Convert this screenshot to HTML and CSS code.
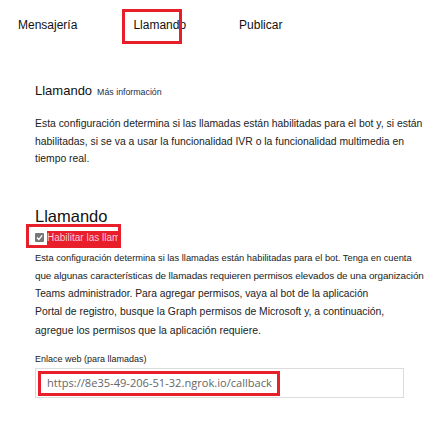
FILE: index.html
```html
<!DOCTYPE html>
<html lang="es">
<head>
<meta charset="utf-8">
<link rel="stylesheet" href="styles.css">
</head>
<body>
  <nav class="tabs">
    <span class="tab">Mensajería</span>
    <span class="tab tab-marked">Llamando<span class="mark mark-tab"></span></span>
    <span class="tab">Publicar</span>
  </nav>

  <section class="intro">
    <div class="intro-head">
      <h2 class="intro-title">Llamando</h2>
      <a class="more">Más información</a>
    </div>
    <p class="intro-text">
      <span class="line">Esta configuración determina si las llamadas están habilitadas para el bot y, si están</span>
      <span class="line">habilitadas, si se va a usar la funcionalidad IVR o la funcionalidad multimedia en</span>
      <span class="line">tiempo real.</span>
    </p>
  </section>

  <section class="calling">
    <h1 class="calling-title">Llamando</h1>
    <label class="enable">
      <span class="check"><svg viewBox="0 0 9 9" width="9" height="9"><path d="M2 4.6 L3.8 6.4 L7.2 2.4" fill="none" stroke="#fff" stroke-width="1.4"/></svg></span>
      <span class="enable-text">Habilitar las llam</span>
      <span class="mark mark-check"></span>
    </label>
    <p class="calling-text">
      <span class="line l1">Esta configuración determina si las llamadas están habilitadas para el bot. Tenga en cuenta</span>
      <span class="line l2">que algunas características de llamadas requieren permisos elevados de una organización</span>
      <span class="line l3">Teams administrador. Para agregar permisos, vaya al bot de la aplicación</span>
      <span class="line l4">Portal de registro, busque la Graph permisos de Microsoft y, a continuación,</span>
      <span class="line l5">agregue los permisos que la aplicación requiere.</span>
    </p>
    <div class="field-label">Enlace web (para llamadas)</div>
    <div class="field">
      <span class="field-value">https://8e35-49-206-51-32.ngrok.io/callback</span>
      <span class="mark mark-field"></span>
    </div>
  </section>
</body>
</html>
```

FILE: styles.css
```css
* { box-sizing: border-box; }

body {
  margin: 0;
  background: #fff;
  color: #222;
  font-family: "Liberation Sans", Arial, sans-serif;
}

.tabs {
  display: flex;
  padding: 17px 0 0 18px;
  height: 60px;
  font-size: 12px;
  line-height: 16px;
  color: #111;
}

.tab { position: relative; }
.tab + .tab { margin-left: 56px; }
.tab + .tab + .tab { margin-left: 53px; }

.mark {
  position: absolute;
  border: 3px solid #e81e2a;
  pointer-events: none;
}

.mark-tab {
  left: -11px;
  top: -8px;
  width: 60px;
  height: 35px;
}

.intro {
  padding: 23px 0 0 35px;
}

.intro-head {
  display: flex;
  align-items: baseline;
  gap: 5px;
}

.intro-title {
  margin: 0;
  font-size: 13px;
  font-weight: normal;
  line-height: 16px;
  color: #111;
}

.more {
  font-size: 8.8px;
  color: #24304a;
}

.intro-text {
  margin: 16px 0 0;
  font-size: 10.4px;
  line-height: 17.5px;
}

.line { display: block; white-space: nowrap; }

.calling {
  padding: 38px 0 0 35px;
}

.calling-title {
  margin: 0;
  font-size: 16.5px;
  font-weight: normal;
  line-height: 20px;
  color: #111;
}

.enable {
  position: relative;
  display: flex;
  align-items: center;
  gap: 3px;
  margin-top: 4px;
  height: 16px;
}

.check {
  display: flex;
  align-items: center;
  justify-content: center;
  width: 9px;
  height: 9px;
  background: #777;
  border-radius: 1px;
}

.enable-text {
  display: block;
  padding-right: 1px;
  white-space: nowrap;
  background: #e81e2a;
  color: #f7c6d6;
  font-size: 10px;
  line-height: 14px;
}

.mark-check {
  left: -9px;
  top: -6px;
  width: 95px;
  height: 24px;
}

.calling-text {
  margin: 3px 0 0;
  font-size: 10px;
  line-height: 18px;
}

.l1 { font-size: 9.3px; }
.l2 { font-size: 9.9px; letter-spacing: -0.1px; }
.l3 { font-size: 10.25px; }
.l4 { font-size: 10.4px; }
.l5 { font-size: 10.5px; }

.field-label {
  margin-top: 14px;
  font-size: 9px;
  line-height: 12px;
  color: #222;
}

.field {
  position: relative;
  width: 369px;
  height: 30px;
  margin-top: 3px;
  border: 1px solid #dcdcdc;
  display: flex;
  align-items: center;
  padding-left: 11px;
}

.field-value {
  font-family: "Open Sans", "Noto Sans", sans-serif;
  font-size: 11.1px;
  color: #666;
}

.mark-field {
  left: 2px;
  top: 2px;
  width: 242px;
  height: 25px;
}
```
